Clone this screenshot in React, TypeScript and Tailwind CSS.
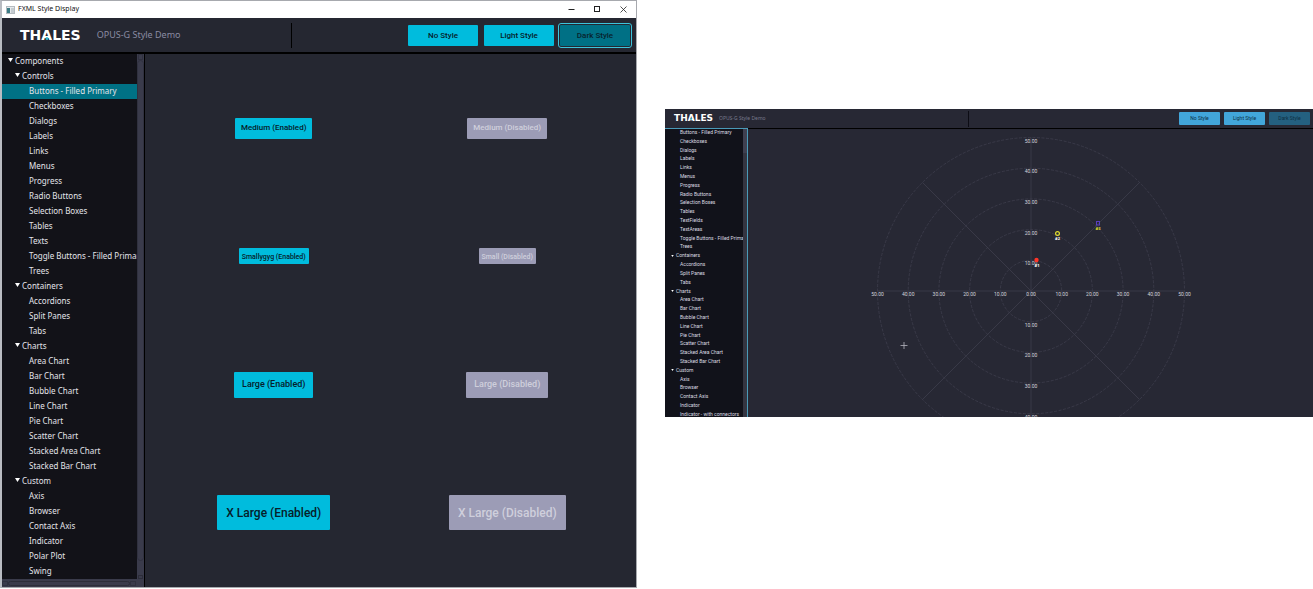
import { useState } from "react";
import { clsx } from "clsx";

type TreeItem = {
  label: string;
  level: 0 | 1 | 2;
};

function group(label: string, children: string[]): TreeItem[] {
  return [
    { label, level: 1 },
    ...children.map((child): TreeItem => ({ label: child, level: 2 })),
  ];
}

const chartNames = [
  "Area Chart",
  "Bar Chart",
  "Bubble Chart",
  "Line Chart",
  "Pie Chart",
  "Scatter Chart",
  "Stacked Area Chart",
  "Stacked Bar Chart",
];

const buttonsDemoTree: TreeItem[] = [
  { label: "Components", level: 0 },
  ...group("Controls", [
    "Buttons - Filled Primary",
    "Checkboxes",
    "Dialogs",
    "Labels",
    "Links",
    "Menus",
    "Progress",
    "Radio Buttons",
    "Selection Boxes",
    "Tables",
    "Texts",
    "Toggle Buttons - Filled Primary",
    "Trees",
  ]),
  ...group("Containers", ["Accordions", "Split Panes", "Tabs"]),
  ...group("Charts", chartNames),
  ...group("Custom", ["Axis", "Browser", "Contact Axis", "Indicator", "Polar Plot", "Swing"]),
];

// The list is scrolled past its two top headings here.
const plotDemoTree: TreeItem[] = [
  ...group("Controls", [
    "Buttons - Filled Primary",
    "Checkboxes",
    "Dialogs",
    "Labels",
    "Links",
    "Menus",
    "Progress",
    "Radio Buttons",
    "Selection Boxes",
    "Tables",
    "TextFields",
    "TextAreas",
    "Toggle Buttons - Filled Primary",
    "Trees",
  ]).slice(1),
  ...group("Containers", ["Accordions", "Split Panes", "Tabs"]),
  ...group("Charts", chartNames),
  ...group("Custom", ["Axis", "Browser", "Contact Axis", "Indicator", "Indicator - with connectors"]),
];

const styles = ["No Style", "Light Style", "Dark Style"];

export default function App() {
  return (
    <main className="grid min-h-screen grid-cols-[637fr_648fr] items-start gap-7 bg-white font-['Noto_Sans','Open_Sans',sans-serif]">
      <ButtonsWindow />
      <PlotWindow />
    </main>
  );
}

function ButtonsWindow() {
  const [selected, setSelected] = useState("Buttons - Filled Primary");
  const [style, setStyle] = useState("Dark Style");

  return (
    <section className="flex min-w-0 flex-col border border-l-2 border-[#a7a9ae] border-l-[#b9bcc2] bg-[#252731]">
      <TitleBar />

      <header className="flex h-[34px] items-center pl-[18px] pr-1.5">
        <div className="flex flex-1 items-center gap-4">
          <Logo className="text-[14px]" dotClassName="size-[3px]" />
          <span className="text-[9px] text-[#8a8ba2]">OPUS-G Style Demo</span>
        </div>
        <div className="flex h-[25px] flex-[1.25] items-center justify-end gap-1.5 border-l border-black">
          {styles.map((name) => (
            <button
              key={name}
              type="button"
              aria-pressed={name === style}
              onClick={() => setStyle(name)}
              className={clsx(
                "h-[21px] w-[70px] rounded-[1px] pt-px font-[Roboto] text-[8px] font-medium",
                name === style
                  ? "bg-[#007085] text-[#08232d] outline-1 outline-offset-1 outline-[#3cc4dc]"
                  : "bg-[#00bcdd] text-[#06202a]",
              )}
            >
              {name}
            </button>
          ))}
        </div>
      </header>

      <div className="flex border-t-2 border-black">
        <nav aria-label="Components" className="w-[142px] shrink-0 bg-[#121218]">
          <div className="flex">
            <ul className="min-w-0 flex-1 overflow-hidden">
              {buttonsDemoTree.map((item) => (
                <li key={item.label}>
                  <button
                    type="button"
                    onClick={() => setSelected(item.label)}
                    className={clsx(
                      "flex h-[15px] w-full items-center gap-0.5 whitespace-nowrap pb-0.5 text-left text-[8px] leading-none text-[#e4e4ea]",
                      item.level === 0 && "pl-1.5",
                      item.level === 1 && "pl-[13px]",
                      item.level === 2 && "pl-[27px]",
                      item.label === selected && "bg-[#007185]",
                    )}
                  >
                    {item.level < 2 && <Arrow className="mb-0.5 h-1 w-[5px]" />}
                    {item.label}
                  </button>
                </li>
              ))}
            </ul>
            <div className="flex w-[7px] flex-col items-center bg-[#3a3b4b]">
              <div className="h-1.5 w-[5px] border border-[#30313f]" />
              <div className="w-full flex-1 rounded-sm border border-[#30313f]" />
              <div className="h-3.5 w-full" />
              <div className="h-1 w-[5px] border border-[#2c2d39]" />
            </div>
          </div>
          <div className="flex h-2 items-center bg-[#3a3b4b] pr-2">
            <div className="h-[5px] w-1.5 border border-[#30313f]" />
            <div className="h-[5px] flex-1 rounded-sm border border-[#2c2d39]" />
            <div className="h-[5px] w-1.5 border border-[#30313f]" />
          </div>
        </nav>

        <div className="grid flex-1 grid-cols-2 grid-rows-4 place-items-center border-l border-black px-3 py-2.5 font-[Roboto] font-medium">
          <DemoButton size="medium">Medium (Enabled)</DemoButton>
          <DemoButton size="medium" disabled>Medium (Disabled)</DemoButton>
          <DemoButton size="small">Smallygyg (Enabled)</DemoButton>
          <DemoButton size="small" disabled>Small (Disabled)</DemoButton>
          <DemoButton size="large">Large (Enabled)</DemoButton>
          <DemoButton size="large" disabled>Large (Disabled)</DemoButton>
          <DemoButton size="xlarge">X Large (Enabled)</DemoButton>
          <DemoButton size="xlarge" disabled>X Large (Disabled)</DemoButton>
        </div>
      </div>
    </section>
  );
}

function TitleBar() {
  return (
    <div className="flex h-[17px] items-center bg-white pl-1 text-[#111]">
      <svg viewBox="0 0 9 8" className="mr-[3px] h-2 w-[9px]" aria-hidden="true">
        <rect x="0.5" y="0.5" width="8" height="7" fill="#e6eaed" stroke="#b5bbc0" />
        <rect x="1" y="2" width="3" height="5" fill="#3c7d86" />
        <rect x="5" y="2" width="3" height="5" fill="#c5ccd1" />
      </svg>
      <h1 className="flex-1 text-[7px]">FXML Style Display</h1>
      <button type="button" aria-label="Minimize" className="flex w-[26px] justify-center">
        <svg viewBox="0 0 7 7" className="size-[7px]" fill="none" stroke="#222">
          <path d="M0.5 3.5h6" />
        </svg>
      </button>
      <button type="button" aria-label="Maximize" className="flex w-[26px] justify-center">
        <svg viewBox="0 0 7 7" className="size-[7px]" fill="none" stroke="#222">
          <rect x="0.5" y="0.5" width="5" height="5" />
        </svg>
      </button>
      <button type="button" aria-label="Close" className="flex w-[26px] justify-center">
        <svg viewBox="0 0 7 7" className="size-[7px]" fill="none" stroke="#222" strokeWidth="0.8">
          <path d="M0.5 0.5l6 6M6.5 0.5l-6 6" />
        </svg>
      </button>
    </div>
  );
}

function DemoButton({
  size,
  disabled,
  children,
}: {
  size: "small" | "medium" | "large" | "xlarge";
  disabled?: boolean;
  children: string;
}) {
  return (
    <button
      type="button"
      disabled={disabled}
      className={clsx(
        "whitespace-nowrap rounded-[1px]",
        size === "small" && "h-4 px-[3px] pt-px text-[7px]",
        size === "medium" && "h-[21px] px-1.5 text-[8px]",
        size === "large" && "h-[26px] px-2 pt-px text-[9px]",
        size === "xlarge" && "h-[35px] px-[9px] text-[12px]",
        disabled ? "bg-[#9c9cb6] text-[#cfcfdc]" : "bg-[#00bcdd] text-[#06202a]",
      )}
    >
      {children}
    </button>
  );
}

function PlotWindow() {
  const [style, setStyle] = useState("Dark Style");

  return (
    <section className="mt-[109px] flex aspect-[648/308] min-w-0 flex-col bg-[#272834]">
      <header className="flex h-[19px] shrink-0 items-center pl-[9px] pr-[3px]">
        <div className="flex flex-1 items-center gap-1.5">
          <Logo className="text-[9px]" dotClassName="size-0.5" />
          <span className="text-[5px] text-[#77788c]">OPUS-G Style Demo</span>
        </div>
        <div className="flex h-4 flex-[1.16] items-center justify-end gap-1 border-l border-[#0c0c14]">
          {styles.map((name) => (
            <button
              key={name}
              type="button"
              aria-pressed={name === style}
              onClick={() => setStyle(name)}
              className={clsx(
                "h-[13px] w-[41px] rounded-[1px] font-[Roboto] text-[5px]",
                name === style ? "bg-[#246080] text-[#0e2f42]" : "bg-[#42a6da] text-[#0b2f45]",
              )}
            >
              {name}
            </button>
          ))}
        </div>
      </header>

      <div className="flex min-h-0 flex-1">
        <nav
          aria-label="Plot components"
          className="flex w-[83px] shrink-0 overflow-hidden border-r border-t border-[#4a9ab8] bg-[#11121a]"
        >
          <ul className="-mb-0.5 -mt-px flex min-w-0 flex-1 flex-col overflow-hidden">
            {plotDemoTree.map((item) => (
              <li key={item.label} className="min-h-0 flex-1">
                <button
                  type="button"
                  className={clsx(
                    "flex h-full w-full items-center gap-0.5 whitespace-nowrap text-left font-[Roboto] text-[5px] leading-none text-[#dcdce2]",
                    item.level === 1 ? "pl-1.5" : "pl-[15px]",
                  )}
                >
                  {item.level === 1 && <Arrow className="h-0.5 w-[3px]" />}
                  {item.label}
                </button>
              </li>
            ))}
          </ul>
          <div className="w-1 bg-[#343541]">
            <div className="h-6 bg-[#3f4050]" />
          </div>
        </nav>
        <div className="min-w-0 flex-1 border-t border-black">
          <PolarPlot />
        </div>
      </div>
    </section>
  );
}

const center = { x: 283, y: 162 };
const ringStep = 30.7;
const rings = [1, 2, 3, 4, 5];
const diagonal = ringStep * 5 * Math.SQRT1_2;

function PolarPlot() {
  const radius = ringStep * 5;

  return (
    <svg viewBox="0 0 565 288" className="size-full" role="img" aria-label="Polar plot">
      <g fill="none" stroke="#3d3e4c" strokeWidth="0.8">
        {rings.map((ring) => (
          <circle key={ring} cx={center.x} cy={center.y} r={ring * ringStep} strokeDasharray="3 1.5" />
        ))}
        <path
          d={`M${center.x - radius} ${center.y}h${radius * 2}M${center.x} ${center.y - radius}v${radius * 2}`}
        />
        <path
          d={`M${center.x - diagonal} ${center.y - diagonal}l${diagonal * 2} ${diagonal * 2}M${center.x + diagonal} ${center.y - diagonal}l${-diagonal * 2} ${diagonal * 2}`}
        />
      </g>

      <g fill="#d4d4dc" fontFamily="Roboto" fontSize="5" textAnchor="middle">
        <text x={center.x} y={center.y + 5}>0.00</text>
        {rings.map((ring) => {
          const label = `${ring}0.00`;
          const offset = ring * ringStep;

          return (
            <g key={ring}>
              <text x={center.x - offset} y={center.y + 5}>{label}</text>
              <text x={center.x + offset} y={center.y + 5}>{label}</text>
              <text x={center.x} y={center.y - offset + 5}>{label}</text>
              {ring < 5 && <text x={center.x} y={center.y + offset + 5}>{label}</text>}
            </g>
          );
        })}
      </g>

      <g fontSize="4" fontWeight="bold" textAnchor="middle">
        <circle cx="288.5" cy="131" r="2.2" fill="#ff3528" />
        <text x="289" y="138" fill="#fff">#1</text>
        <circle cx="309.5" cy="104.5" r="1.9" fill="none" stroke="#e0de30" strokeWidth="1.2" />
        <text x="309.5" y="111" fill="#fff">#2</text>
        <rect x="348.5" y="92.5" width="3" height="3.5" fill="none" stroke="#5a3fc0" />
        <text x="350" y="101" fill="#e6e42c">#3</text>
      </g>

      <path d="M152.5 216.5h7M156 213v7" stroke="#b4b4be" strokeWidth="0.8" />
    </svg>
  );
}

function Logo({ className, dotClassName }: { className: string; dotClassName: string }) {
  return (
    <strong className={clsx("font-['DejaVu_Sans'] font-bold leading-none text-white", className)}>
      TH
      <span className="relative">
        A
        <span
          className={clsx(
            "absolute bottom-[3px] left-1/2 -translate-x-1/2 rounded-full bg-[#35b6cc]",
            dotClassName,
          )}
        />
      </span>
      LES
    </strong>
  );
}

function Arrow({ className }: { className: string }) {
  return (
    <svg viewBox="0 0 5 4" className={clsx("shrink-0", className)} fill="#fff" aria-hidden="true">
      <path d="M0 0h5L2.5 4z" />
    </svg>
  );
}
